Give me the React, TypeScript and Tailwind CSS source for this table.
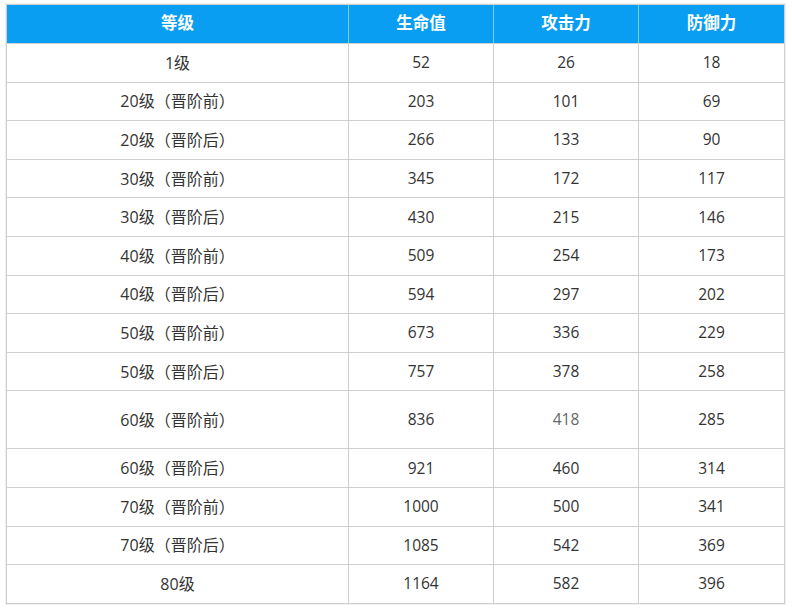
import React from "react";

const rows: [string, string, string, string, boolean?, boolean?][] = [
  ["1级", "52", "26", "18"],
  ["20级（晋阶前）", "203", "101", "69"],
  ["20级（晋阶后）", "266", "133", "90"],
  ["30级（晋阶前）", "345", "172", "117"],
  ["30级（晋阶后）", "430", "215", "146"],
  ["40级（晋阶前）", "509", "254", "173"],
  ["40级（晋阶后）", "594", "297", "202"],
  ["50级（晋阶前）", "673", "336", "229"],
  ["50级（晋阶后）", "757", "378", "258"],
  ["60级（晋阶前）", "836", "418", "285", true, true],
  ["60级（晋阶后）", "921", "460", "314"],
  ["70级（晋阶前）", "1000", "500", "341"],
  ["70级（晋阶后）", "1085", "542", "369"],
  ["80级", "1164", "582", "396"],
];

export default function App() {
  return (
    <div
      className="w-[792px] h-[611px] bg-white pt-[4px] pl-[6px]"
      style={{ fontFamily: '"Open Sans", "Noto Sans CJK SC", sans-serif' }}
    >
      <div className="w-[779px] border border-[#cfcfcf] shadow-[0_0_0_1px_#f0f0f0]">
        <div className="grid grid-cols-[341px_145px_145px_146px] h-[38px] bg-[#0a9ef2] text-white text-[16.5px] font-bold">
          {["等级", "生命值", "攻击力", "防御力"].map((h, i) => (
            <div
              key={h}
              className={`flex items-center justify-center pb-[1px] ${i > 0 ? "border-l border-[#7fcaf5]" : ""}`}
            >
              {h}
            </div>
          ))}
        </div>
        {rows.map((r) => (
          <div
            key={r[0]}
            className={`grid grid-cols-[341px_145px_145px_146px] border-t border-[#cfcfcf] text-[15.5px] text-[#333] ${r[4] ? "h-[58px]" : "h-[38.6px]"}`}
          >
            {r.slice(0, 4).map((c, i) => (
              <div
                key={i}
                className={`flex items-center justify-center ${i === 0 ? "text-[16px]" : "border-l border-[#cfcfcf]"} ${r[5] && i === 2 ? "text-[#666]" : ""}`}
              >
                {c as string}
              </div>
            ))}
          </div>
        ))}
      </div>
    </div>
  );
}
